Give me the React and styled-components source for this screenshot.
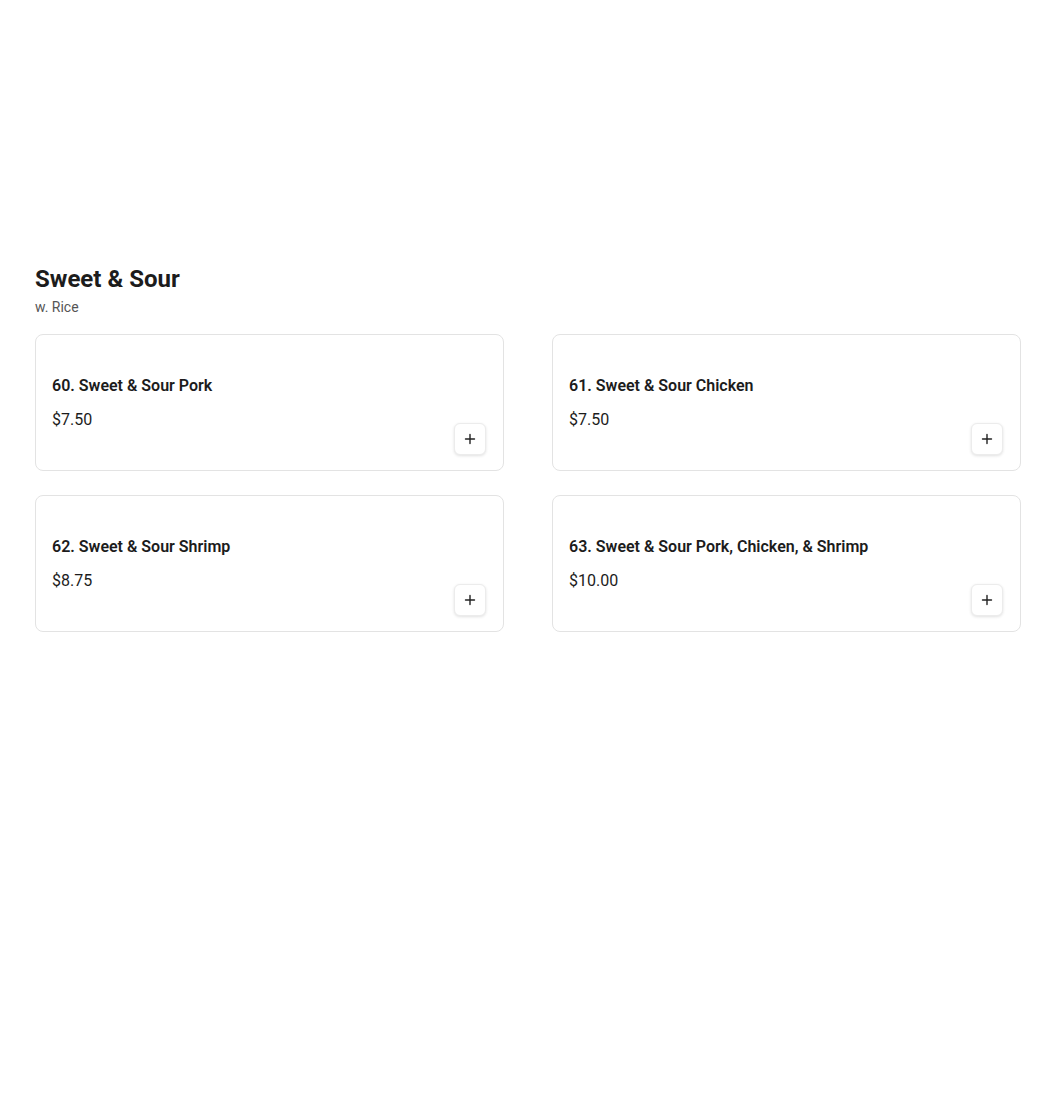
import React from 'react'
import styled, { createGlobalStyle } from 'styled-components'

const items = [
  { id: 60, name: 'Sweet & Sour Pork', price: '$7.50' },
  { id: 61, name: 'Sweet & Sour Chicken', price: '$7.50' },
  { id: 62, name: 'Sweet & Sour Shrimp', price: '$8.75' },
  { id: 63, name: 'Sweet & Sour Pork, Chicken, & Shrimp', price: '$10.00' },
]

export default function App() {
  return (
    <>
      <GlobalStyle />
      <Section>
        <Heading>Sweet &amp; Sour</Heading>
        <Subtitle>w. Rice</Subtitle>
        <Grid>
          {items.map((item) => (
            <Card key={item.id}>
              <ItemName>
                {item.id}. {item.name}
              </ItemName>
              <Footer>
                <Price>{item.price}</Price>
                <AddButton aria-label="Add">
                  <svg width="12" height="12" viewBox="0 0 12 12" fill="none">
                    <path
                      d="M6 1.5v9M1.5 6h9"
                      stroke="#222"
                      strokeWidth="1.4"
                      strokeLinecap="round"
                    />
                  </svg>
                </AddButton>
              </Footer>
            </Card>
          ))}
        </Grid>
      </Section>
    </>
  )
}

const GlobalStyle = createGlobalStyle`
  body {
    margin: 0;
    background: #fff;
    font-family: Roboto, 'Liberation Sans', sans-serif;
    color: #1c1c1c;
  }
`

const Section = styled.section`
  width: 986px;
  margin-left: 35px;
  padding-top: 263px;
`

const Heading = styled.h2`
  margin: 0;
  font-size: 24px;
  line-height: 32px;
  font-weight: 700;
  color: #1c1c1c;
`

const Subtitle = styled.p`
  margin: 2px 0 0;
  font-size: 14px;
  line-height: 20px;
  color: #555;
`

const Grid = styled.div`
  display: grid;
  grid-template-columns: 1fr 1fr;
  column-gap: 48px;
  row-gap: 24px;
  margin-top: 17px;
`

const Card = styled.div`
  display: flex;
  flex-direction: column;
  padding: 39px 16px 15px;
  border: 1px solid #e3e3e3;
  border-radius: 8px;
  background: #fff;
`

const ItemName = styled.h3`
  margin: 0;
  font-size: 16px;
  line-height: 24px;
  font-weight: 600;
  color: #1c1c1c;
`

const Footer = styled.div`
  display: flex;
  justify-content: space-between;
  align-items: flex-start;
  margin-top: 10px;
`

const Price = styled.span`
  font-size: 16px;
  line-height: 24px;
  color: #1c1c1c;
`

const AddButton = styled.button`
  display: flex;
  align-items: center;
  justify-content: center;
  width: 32px;
  height: 32px;
  margin-top: 15px;
  margin-right: 1px;
  padding: 0;
  border: 1px solid #ececec;
  border-radius: 6px;
  background: #fff;
  box-shadow: 0 1px 3px rgba(0, 0, 0, 0.12);
  cursor: pointer;
`
